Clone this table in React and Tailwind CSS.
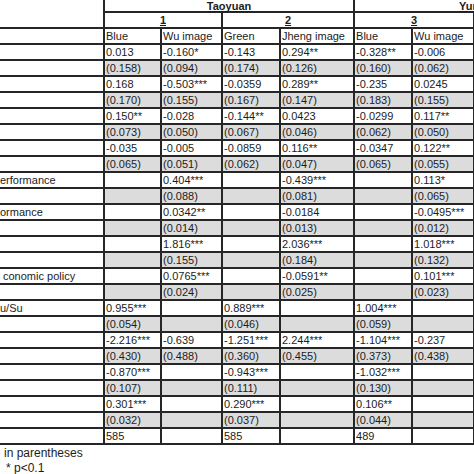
import React from 'react';

const rows = [
  { label: '', vals: ['0.013', '-0.160*', '-0.143', '0.294**', '-0.328**', '-0.006'] },
  { se: true, vals: ['(0.158)', '(0.094)', '(0.174)', '(0.126)', '(0.160)', '(0.062)'] },
  { label: '', vals: ['0.168', '-0.503***', '-0.0359', '0.289**', '-0.235', '0.0245'] },
  { se: true, vals: ['(0.170)', '(0.155)', '(0.167)', '(0.147)', '(0.183)', '(0.155)'] },
  { label: '', vals: ['0.150**', '-0.028', '-0.144**', '0.0423', '-0.0299', '0.117**'] },
  { se: true, vals: ['(0.073)', '(0.050)', '(0.067)', '(0.046)', '(0.062)', '(0.050)'] },
  { label: '', vals: ['-0.035', '-0.005', '-0.0859', '0.116**', '-0.0347', '0.122**'] },
  { se: true, vals: ['(0.065)', '(0.051)', '(0.062)', '(0.047)', '(0.065)', '(0.055)'] },
  { label: 'erformance', vals: ['', '0.404***', '', '-0.439***', '', '0.113*'] },
  { se: true, vals: ['', '(0.088)', '', '(0.081)', '', '(0.065)'] },
  { label: 'ormance', vals: ['', '0.0342**', '', '-0.0184', '', '-0.0495***'] },
  { se: true, vals: ['', '(0.014)', '', '(0.013)', '', '(0.012)'] },
  { label: '', vals: ['', '1.816***', '', '2.036***', '', '1.018***'] },
  { se: true, vals: ['', '(0.155)', '', '(0.184)', '', '(0.132)'] },
  { label: 'conomic policy', indent: true, vals: ['', '0.0765***', '', '-0.0591**', '', '0.101***'] },
  { se: true, vals: ['', '(0.024)', '', '(0.025)', '', '(0.023)'] },
  { label: 'u/Su', vals: ['0.955***', '', '0.889***', '', '1.004***', ''] },
  { se: true, vals: ['(0.054)', '', '(0.046)', '', '(0.059)', ''] },
  { label: '', vals: ['-2.216***', '-0.639', '-1.251***', '2.244***', '-1.104***', '-0.237'] },
  { se: true, vals: ['(0.430)', '(0.488)', '(0.360)', '(0.455)', '(0.373)', '(0.438)'] },
  { label: '', vals: ['-0.870***', '', '-0.943***', '', '-1.032***', ''] },
  { se: true, vals: ['(0.107)', '', '(0.111)', '', '(0.130)', ''] },
  { label: '', vals: ['0.301***', '', '0.290***', '', '0.106**', ''] },
  { se: true, vals: ['(0.032)', '', '(0.037)', '', '(0.044)', ''] },
  { label: '', vals: ['585', '', '585', '', '489', ''] },
];

const cell = 'border-2 border-[#262626] px-[1px] h-[16px] leading-[12px] align-middle whitespace-nowrap overflow-hidden';

export default function App() {
  return (
    <div
      className="w-[474px] h-[474px] overflow-hidden bg-white text-[#1c1c1c] text-[11px]"
      style={{ fontFamily: '"Liberation Sans", Arial, sans-serif' }}
    >
      <table className="table-fixed border-collapse w-[640px] -ml-[1px]">
        <colgroup>
          <col className="w-[105px]" />
          <col className="w-[57px]" />
          <col className="w-[61px]" />
          <col className="w-[58px]" />
          <col className="w-[74px]" />
          <col className="w-[58px]" />
          <col className="w-[62px]" />
          <col className="w-[165px]" />
        </colgroup>
        <thead>
          <tr>
            <th rowSpan={2} className="border-b-2 border-[#262626]"></th>
            <th colSpan={4} className="border-2 border-t-0 border-[#262626] h-[12px] leading-[10px] font-bold underline text-center">
              Taoyuan
            </th>
            <th colSpan={3} className="border-2 border-t-0 border-[#262626] h-[12px] leading-[10px] font-bold underline text-left pl-[104px]">
              Yunlin
            </th>
          </tr>
          <tr>
            <th colSpan={2} className={`${cell} font-bold underline text-center`}>1</th>
            <th colSpan={2} className={`${cell} font-bold underline text-center`}>2</th>
            <th colSpan={2} className={`${cell} font-bold underline text-center`}>3</th>
            <th className={cell}></th>
          </tr>
          <tr>
            <th className="border-y-2 border-[#262626] h-[16px]"></th>
            {['Blue', 'Wu image', 'Green', 'Jheng image', 'Blue', 'Wu image', ''].map((h, i) => (
              <th key={i} className={`${cell} font-normal text-left`}>{h}</th>
            ))}
          </tr>
        </thead>
        <tbody>
          {rows.map((r, i) => (
            <tr key={i}>
              <td className={`border-y-2 border-r-2 border-[#262626] h-[16px] leading-[12px] whitespace-nowrap overflow-hidden ${r.indent ? 'pl-[4px]' : 'pl-[1px]'}`}>
                {r.label || ''}
              </td>
              {[...r.vals, ''].map((v, j) => (
                <td key={j} className={`${cell} ${r.se ? 'bg-[#dcdcdc]' : 'bg-white'}`}>{v}</td>
              ))}
            </tr>
          ))}
        </tbody>
      </table>
      <div className="pl-[4px] pt-[1px] leading-[15px] text-[12px]">in parentheses</div>
      <div className="pl-[6px] leading-[15px] text-[12px]">* p&lt;0.1</div>
    </div>
  );
}
